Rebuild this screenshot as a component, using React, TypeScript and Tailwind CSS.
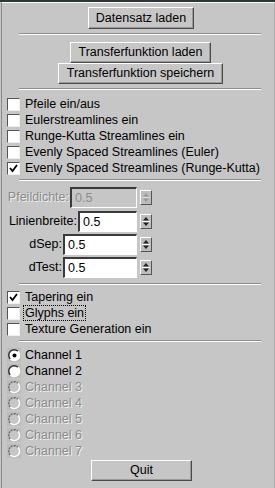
import React from 'react';

const font = { fontFamily: '"Liberation Sans", Arial, sans-serif' };

function Button({ label, className }: { label: string; className: string }) {
  return (
    <div
      className={`flex items-center justify-center h-[21px] border-t border-l border-t-white border-l-white border-b border-r border-b-[#4a4a4a] border-r-[#4a4a4a] shadow-[inset_-1px_-1px_0_#9a9a9a] text-[12.5px] text-black ${className}`}
    >
      {label}
    </div>
  );
}

function Separator({ className }: { className: string }) {
  return <div className={`ml-[17px] w-[242px] h-[2px] border-t border-t-[#8c8c8c] border-b border-b-white ${className}`} />;
}

function CheckBox({ label, checked, focus }: { label: string; checked?: boolean; focus?: boolean }) {
  return (
    <div className="flex items-center h-[16px] pl-[5px]">
      <div className="w-[13px] h-[13px] bg-white border-t border-l border-t-[#555] border-l-[#555] border-b border-r border-b-[#eee] border-r-[#eee] flex items-center justify-center">
        {checked && (
          <svg width="9" height="9" viewBox="0 0 9 9">
            <path d="M1 4 L3.5 7 L8 1" stroke="#000" strokeWidth="1.8" fill="none" />
          </svg>
        )}
      </div>
      <span
        className={`ml-[4px] text-[12.5px] text-black leading-[14px] px-[1px] ${focus ? 'outline outline-1 outline-dotted outline-black' : ''}`}
      >
        {label}
      </span>
    </div>
  );
}

function Spinner({ disabled }: { disabled?: boolean }) {
  const c = disabled ? '#9a9a9a' : '#222';
  return (
    <div className="ml-[3px] w-[12px] h-[15px] flex flex-col border-t border-l border-t-white border-l-white border-b border-r border-b-[#555] border-r-[#555] bg-[#bdbdbd]">
      <svg width="10" height="13" viewBox="0 0 10 13">
        <path d="M2 5.5 L5 2 L8 5.5 Z" fill={c} />
        <line x1="1" y1="6.5" x2="9" y2="6.5" stroke={disabled ? '#ddd' : '#fff'} strokeWidth="1" />
        <path d="M2 7.5 L5 11 L8 7.5 Z" fill={c} />
      </svg>
    </div>
  );
}

function SpinRow({ label, value, disabled, inputW, className }: { label: string; value: string; disabled?: boolean; inputW: string; className: string }) {
  return (
    <div className={`flex items-center h-[21px] ${className}`}>
      <div className="w-[135px] flex items-center justify-end">
        <span
          className={`text-[12.5px] mr-[1px] ${disabled ? 'text-[#8c8c8c] [text-shadow:1px_1px_0_#f0f0f0]' : 'text-black'}`}
        >
          {label}
        </span>
        <div
          className={`${inputW} h-[21px] flex items-center pl-[3px] border-t-2 border-l-2 border-t-[#3a3a3a] border-l-[#3a3a3a] border-b border-r border-b-white border-r-white text-[12.5px] ${disabled ? 'bg-[#c6c6c6] text-[#8c8c8c]' : 'bg-white text-black'}`}
        >
          {value}
        </div>
      </div>
      <Spinner disabled={disabled} />
    </div>
  );
}

function Radio({ label, checked, disabled }: { label: string; checked?: boolean; disabled?: boolean }) {
  return (
    <div className="flex items-center h-[16px] pl-[5px]">
      <div className="w-[14px] h-[14px] bg-[#bcbcbc] flex items-center justify-center">
        <svg width="13" height="13" viewBox="0 0 13 13">
          <circle cx="6.5" cy="6.5" r="5" fill={disabled ? '#c6c6c6' : '#fff'} />
          <path d="M2.3 10 A5 5 0 0 1 10 2.3" stroke={disabled ? '#6a6a6a' : '#333'} strokeWidth="1.4" fill="none" strokeDasharray={disabled ? '2 1' : undefined} />
          <path d="M10 2.3 A5 5 0 0 1 2.3 10" stroke="#fff" strokeWidth="1.4" fill="none" />
          {checked && <circle cx="6.5" cy="6.5" r="2" fill="#000" />}
        </svg>
      </div>
      <span
        className={`ml-[4px] text-[12.5px] leading-[14px] ${disabled ? 'text-[#8c8c8c] [text-shadow:1px_1px_0_#f0f0f0]' : 'text-black'}`}
      >
        {label}
      </span>
    </div>
  );
}

export default function App() {
  return (
    <div className="w-[275px] h-[488px] bg-[#c6c6c6] border-t-2 border-t-[#2f3638] overflow-hidden" style={font}>
      <div className="h-full ml-[1px] border-t border-l border-t-white border-l-[#8a8a8a] border-r border-r-[#b0b0b0] flex flex-col">
        <Button label="Datensatz laden" className="mt-[4px] ml-[86px] w-[106px] h-[22px]" />
        <Separator className="mt-[4px]" />
        <Button label="Transferfunktion laden" className="mt-[7px] ml-[68px] w-[141px]" />
        <Button label="Transferfunktion speichern" className="mt-[0px] ml-[56px] w-[165px]" />
        <Separator className="mt-[4px]" />
        <div className="mt-[6px] flex flex-col">
          <CheckBox label="Pfeile ein/aus" />
          <CheckBox label="Eulerstreamlines ein" />
          <CheckBox label="Runge-Kutta Streamlines ein" />
          <CheckBox label="Evenly Spaced Streamlines (Euler)" />
          <CheckBox label="Evenly Spaced Streamlines (Runge-Kutta)" checked />
        </div>
        <Separator className="mt-[3px]" />
        <SpinRow label="Pfeildichte:" value="0.5" disabled inputW="w-[67px]" className="mt-[6px]" />
        <SpinRow label="Linienbreite:" value="0.5" inputW="w-[59px]" className="mt-[3px]" />
        <SpinRow label="dSep:" value="0.5" inputW="w-[74px]" className="mt-[2px]" />
        <SpinRow label="dTest:" value="0.5" inputW="w-[74px]" className="mt-[2px]" />
        <Separator className="mt-[5px]" />
        <div className="mt-[4px] flex flex-col">
          <CheckBox label="Tapering ein" checked />
          <CheckBox label="Glyphs ein" focus />
          <CheckBox label="Texture Generation ein" />
        </div>
        <Separator className="mt-[3px]" />
        <div className="mt-[5px] flex flex-col">
          <Radio label="Channel 1" checked />
          <Radio label="Channel 2" />
          <Radio label="Channel 3" disabled />
          <Radio label="Channel 4" disabled />
          <Radio label="Channel 5" disabled />
          <Radio label="Channel 6" disabled />
          <Radio label="Channel 7" disabled />
        </div>
        <Button label="Quit" className="mt-[1px] ml-[89px] w-[101px]" />
      </div>
    </div>
  );
}
